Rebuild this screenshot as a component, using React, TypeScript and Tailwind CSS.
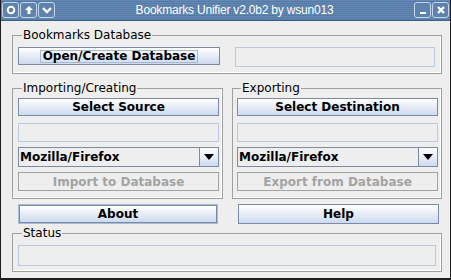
const ui = { fontFamily: '"DejaVu Sans", "Liberation Sans", sans-serif' };

function TitleBtn({ children }: { children: React.ReactNode }) {
  return (
    <div className="w-[17px] h-[16px] rounded-[3px] border border-[#c4d6ec] bg-[#5e82ad] flex items-center justify-center">
      {children}
    </div>
  );
}

function Btn({ label, focus = false, w }: { label: string; focus?: boolean; w: string }) {
  return (
    <div
      className={`${w} h-[18px] border border-[#7b8aa6] bg-gradient-to-b from-white to-[#cddaee] flex items-center justify-center text-[12px] font-bold text-black`}
    >
      {focus ? <span className="border border-[#a6b9d2] px-[2px] leading-[11px]">{label}</span> : label}
    </div>
  );
}

function Field({ cls }: { cls: string }) {
  return <div className={`${cls} border border-[#b8c9e2] bg-[#eeeeee]`} />;
}

function Combo() {
  return (
    <div className="h-[20px] border border-[#7b8aa6] flex bg-[#eeeeee]">
      <div className="flex-1 pl-[1px] text-[12px] font-bold text-black leading-[18px]">Mozilla/Firefox</div>
      <div className="w-[19px] border-l border-[#7b8aa6] bg-gradient-to-b from-white to-[#cddaee] flex items-center justify-center">
        <svg width="10" height="6" viewBox="0 0 10 6">
          <path d="M0 0h10L5 6z" fill="#000" />
        </svg>
      </div>
    </div>
  );
}

function Disabled({ label }: { label: string }) {
  return (
    <div className="h-[19px] border border-[#a3a3a3] bg-[#eeeeee] flex items-center justify-center text-[12px] font-bold text-[#a3a3a3]">
      {label}
    </div>
  );
}

function Group({ title, cls, children }: { title: string; cls: string; children: React.ReactNode }) {
  return (
    <fieldset className={`${cls} border border-[#a0a0a0] shadow-[inset_-1px_-1px_0_#ffffff]`}>
      <legend className="ml-[4px] px-[1px] text-[12px] leading-[14px] text-black">{title}</legend>
      {children}
    </fieldset>
  );
}

export default function App() {
  return (
    <div
      className="w-[451px] h-[280px] bg-[#eeeeee] border-l border-r border-b-2 border-[#1e1e1e] flex flex-col overflow-hidden"
      style={ui}
    >
      <div className="h-[21px] shrink-0 bg-[repeating-linear-gradient(to_bottom,#6489b4_0px,#6489b4_1px,#557aa6_1px,#557aa6_2px)] border-b border-[#3d5f88] flex items-center px-[1px]">
        <div className="flex gap-[1px]">
          <TitleBtn>
            <svg width="10" height="10" viewBox="0 0 10 10">
              <circle cx="5" cy="5" r="3.3" fill="none" stroke="#fff" strokeWidth="2" />
            </svg>
          </TitleBtn>
          <TitleBtn>
            <svg width="10" height="10" viewBox="0 0 10 10">
              <path d="M5 1L1 5h2.5v4h3V5H9z" fill="#fff" />
            </svg>
          </TitleBtn>
          <TitleBtn>
            <svg width="10" height="10" viewBox="0 0 10 10">
              <path d="M1 3l4 4 4-4" fill="none" stroke="#fff" strokeWidth="2.4" />
            </svg>
          </TitleBtn>
        </div>
        <div
          className="flex-1 text-center text-[12px] text-white tracking-[-0.2px]"
          style={{ fontFamily: '"Liberation Sans", Arial, sans-serif' }}
        >
          Bookmarks Unifier v2.0b2 by wsun013
        </div>
        <div className="flex gap-[1px]">
          <TitleBtn>
            <svg width="10" height="10" viewBox="0 0 10 10">
              <rect x="2" y="7" width="6" height="2" fill="#fff" />
            </svg>
          </TitleBtn>
          <TitleBtn>
            <svg width="10" height="10" viewBox="0 0 10 10">
              <path d="M2 2l6 6M8 2l-6 6" stroke="#fff" strokeWidth="2.4" />
            </svg>
          </TitleBtn>
        </div>
      </div>

      <div className="flex flex-col pl-[11px] pr-[8px] pt-[7px]">
        <Group title="Bookmarks Database" cls="pl-[5px] pr-[6px] pt-[5px] pb-[6px]">
          <div className="flex items-start gap-[15px]">
            <Btn label="Open/Create Database" focus w="w-[202px]" />
            <Field cls="flex-1 h-[20px]" />
          </div>
        </Group>

        <div className="flex gap-[9px] mt-[7px]">
          <Group title="Importing/Creating" cls="flex-1 pl-[5px] pr-[3px] pt-[3px] pb-[7px]">
            <div className="flex flex-col">
              <Btn label="Select Source" w="w-full" />
              <Field cls="h-[19px] mt-[7px]" />
              <div className="mt-[5px]"><Combo /></div>
              <div className="mt-[5px]"><Disabled label="Import to Database" /></div>
            </div>
          </Group>
          <Group title="Exporting" cls="flex-1 pl-[4px] pr-[3px] pt-[3px] pb-[7px]">
            <div className="flex flex-col">
              <Btn label="Select Destination" w="w-full" />
              <Field cls="h-[19px] mt-[7px]" />
              <div className="mt-[5px]"><Combo /></div>
              <div className="mt-[5px]"><Disabled label="Export from Database" /></div>
            </div>
          </Group>
        </div>

        <div className="flex justify-between pl-[6px] pr-[3px] mt-[5px]">
          <div className="border border-[#a9bdd8]">
            <Btn label="About" w="w-[198px]" />
          </div>
          <div className="h-[20px] w-[201px] border border-[#7b8aa6] bg-gradient-to-b from-white to-[#cddaee] flex items-center justify-center text-[12px] font-bold text-black">
            Help
          </div>
        </div>

        <Group title="Status" cls="mt-[2px] pl-[5px] pr-[5px] pt-[5px] pb-[5px]">
          <Field cls="h-[21px]" />
        </Group>
      </div>
    </div>
  );
}
